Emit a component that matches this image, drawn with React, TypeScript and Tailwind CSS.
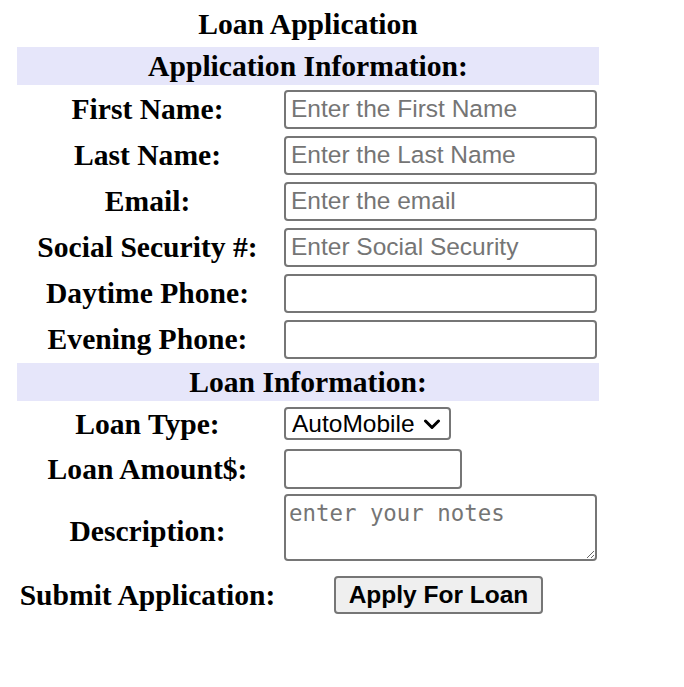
import React from "react";

const serif = "font-['Liberation_Serif','Times_New_Roman',serif]";
const sans = "font-['Liberation_Sans',Arial,sans-serif]";
const inputCls = `w-[313px] h-[39px] border-2 border-[#767676] rounded-[4px] bg-white px-[5px] text-[24.5px] text-black placeholder:text-[#757575] ${sans} outline-none`;

function Row({ label, h, children, labelCls = "" }: { label: string; h: string; children: React.ReactNode; labelCls?: string }) {
  return (
    <div className={`flex items-center ${h}`}>
      <div className={`w-[261px] text-center font-bold text-[29.6px] leading-[32px] whitespace-nowrap ${labelCls}`}>{label}</div>
      <div className="w-[321px] pl-[6px] flex items-center">{children}</div>
    </div>
  );
}

function Section({ title }: { title: string }) {
  return (
    <div className="h-[38px] bg-[#e6e6fa] flex items-center justify-center font-bold text-[29.6px] leading-[32px]">
      {title}
    </div>
  );
}

export default function App() {
  return (
    <div className={`w-[684px] h-[687px] bg-white text-black ${serif}`}>
      <div className="ml-[17px] w-[582px] flex flex-col">
        <div className="h-[47px] flex items-center justify-center font-bold text-[29.6px] leading-[32px]">
          Loan Application
        </div>
        <Section title="Application Information:" />
        <div className="h-[1px]" />
        <Row label="First Name:" h="h-[46px]">
          <input className={inputCls} placeholder="Enter the First Name" />
        </Row>
        <Row label="Last Name:" h="h-[46px]">
          <input className={inputCls} placeholder="Enter the Last Name" />
        </Row>
        <Row label="Email:" h="h-[46px]">
          <input className={inputCls} placeholder="Enter the email" />
        </Row>
        <Row label="Social Security #:" h="h-[46px]">
          <input className={inputCls} placeholder="Enter Social Security" />
        </Row>
        <Row label="Daytime Phone:" h="h-[46px]">
          <input className={inputCls} />
        </Row>
        <Row label="Evening Phone:" h="h-[46px]">
          <input className={inputCls} />
        </Row>
        <div className="h-[1px]" />
        <Section title="Loan Information:" />
        <Row label="Loan Type:" h="h-[45px]">
          <div className="relative">
            <select
              className={`appearance-none w-[167px] h-[33px] border-2 border-[#767676] rounded-[4px] bg-white pl-[6px] text-[24.5px] leading-[29px] text-black ${sans} outline-none`}
              defaultValue="AutoMobile"
            >
              <option>AutoMobile</option>
              <option>Home</option>
              <option>Personal</option>
            </select>
            <svg className="absolute left-[139px] top-[12px] pointer-events-none" width="18" height="11" viewBox="0 0 18 11">
              <path d="M2.5 2 L9 8.5 L15.5 2" fill="none" stroke="#000" strokeWidth="3" strokeLinecap="round" strokeLinejoin="round" />
            </svg>
          </div>
        </Row>
        <Row label="Loan Amount$:" h="h-[45px]">
          <input className={`w-[178px] h-[40px] border-2 border-[#767676] rounded-[4px] bg-white px-[5px] text-[24.5px] ${sans} outline-none`} />
        </Row>
        <Row label="Description:" h="h-[73px]" labelCls="pt-[7px]">
          <textarea
            className="w-[313px] h-[67px] border-2 border-[#767676] rounded-[4px] bg-white px-[3px] py-[3px] text-[22.4px] leading-[28px] text-black placeholder:text-[#757575] font-['DejaVu_Sans_Mono',monospace] outline-none"
            placeholder="enter your notes"
          />
        </Row>
        <div className="flex items-center h-[62px]">
          <div className="w-[261px] text-center font-bold text-[29.6px] leading-[32px] whitespace-nowrap">Submit Application:</div>
          <div className="w-[321px] flex justify-center">
            <button className={`h-[38px] px-[13px] border-2 border-[#767676] rounded-[4px] bg-[#efefef] font-bold text-[24.5px] leading-[30px] text-black ${sans}`}>
              Apply For Loan
            </button>
          </div>
        </div>
      </div>
    </div>
  );
}
